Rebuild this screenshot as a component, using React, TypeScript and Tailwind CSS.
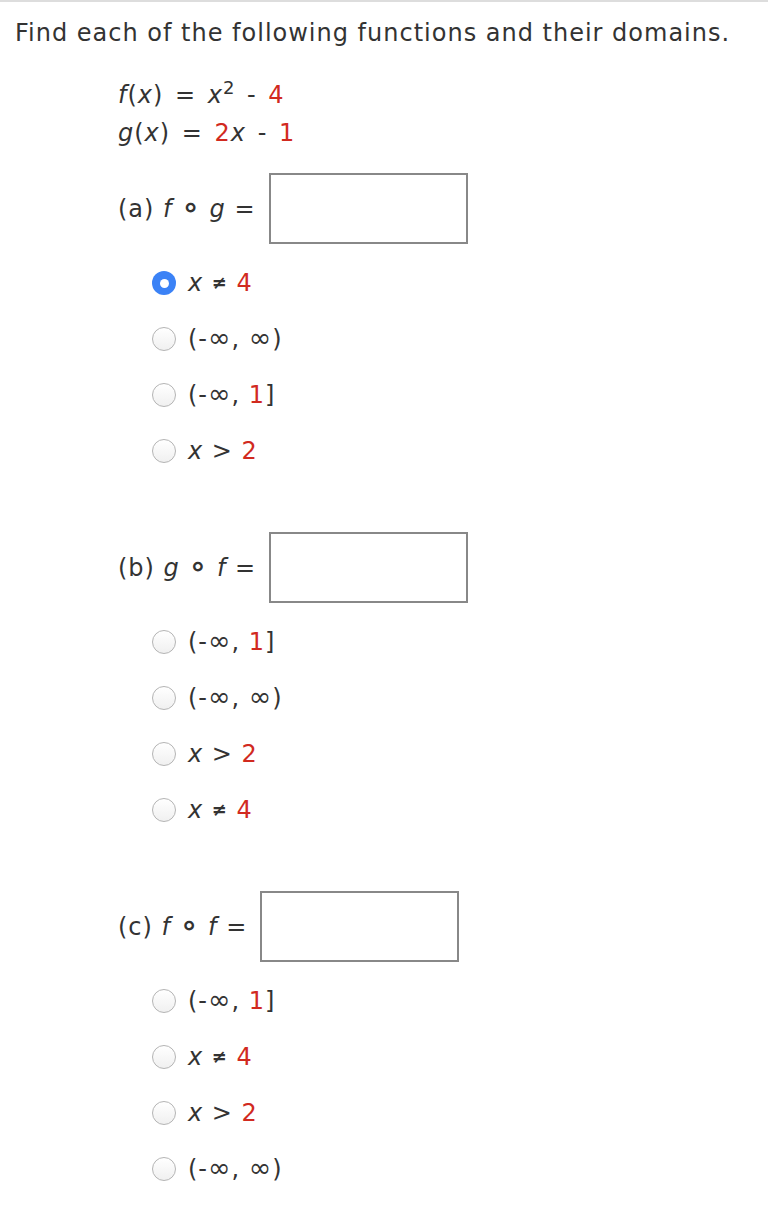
const RED = "text-[#d12a1f]"

function Num({ children }: { children: React.ReactNode }) {
  return <span className={RED}>{children}</span>
}

function Inf() {
  return <span className="text-[27px] leading-none">∞</span>
}

function Ring() {
  return <b className="text-[30px] leading-none">∘</b>
}

function Radio({ checked }: { checked?: boolean }) {
  if (checked) {
    return (
      <span className="flex h-[24px] w-[24px] shrink-0 items-center justify-center rounded-full bg-[#3b82f6]">
        <span className="h-[9px] w-[9px] rounded-full bg-white" />
      </span>
    )
  }
  return (
    <span className="h-[24px] w-[24px] shrink-0 rounded-full border border-[#b4b4b4] bg-gradient-to-b from-white to-[#f0f0f0]" />
  )
}

type Domain = "neq" | "all" | "le1" | "gt2"

function DomainText({ kind }: { kind: Domain }) {
  if (kind === "neq")
    return (
      <span>
        <i>x</i> <span className="text-[18px] font-bold align-[2px]">≠</span> <Num>4</Num>
      </span>
    )
  if (kind === "all")
    return (
      <span>
        (-<Inf />, <Inf />)
      </span>
    )
  if (kind === "le1")
    return (
      <span>
        (-<Inf />, <Num>1</Num>]
      </span>
    )
  return (
    <span>
      <i>x</i> &gt; <Num>2</Num>
    </span>
  )
}

function Part({
  label,
  options,
  checked,
}: {
  label: React.ReactNode
  options: Domain[]
  checked?: number
}) {
  return (
    <div>
      <div className="flex items-center pl-[118px]">
        <span>{label}</span>
        <div className="ml-[13px] h-[71px] w-[199px] border-2 border-[#888] bg-white" />
      </div>
      <div className="mt-[11px] pl-[152px]">
        {options.map((o, i) => (
          <div key={i} className="flex h-[56px] items-center">
            <Radio checked={checked === i} />
            <span className="ml-[12px]">
              <DomainText kind={o} />
            </span>
          </div>
        ))}
      </div>
    </div>
  )
}

export default function App() {
  return (
    <div className="min-h-[1232px] border-t-2 border-[#dddddd] bg-white font-['DejaVu_Sans','Verdana',sans-serif] text-[24px] tracking-[1px] text-[#333]">
      <p className="pl-[15px] pt-[16px] leading-[30px]">
        Find each of the following functions and their domains.
      </p>

      <div className="mt-[28px] pl-[118px] leading-[38px] [word-spacing:3px]">
        <div>
          <i>f</i>(<i>x</i>) = <i>x</i>
          <sup className="text-[18px]">2</sup> - <Num>4</Num>
        </div>
        <div>
          <i>g</i>(<i>x</i>) = <Num>2</Num>
          <i>x</i> - <Num>1</Num>
        </div>
      </div>

      <div className="mt-[21px]">
        <Part
          label={
            <>
              (a) <i>f</i> <Ring /> <i>g</i> =
            </>
          }
          options={["neq", "all", "le1", "gt2"]}
          checked={0}
        />
      </div>

      <div className="mt-[53px]">
        <Part
          label={
            <>
              (b) <i>g</i> <Ring /> <i>f</i> =
            </>
          }
          options={["le1", "all", "gt2", "neq"]}
        />
      </div>

      <div className="mt-[53px]">
        <Part
          label={
            <>
              (c) <i>f</i> <Ring /> <i>f</i> =
            </>
          }
          options={["le1", "neq", "gt2", "all"]}
        />
      </div>
    </div>
  )
}
